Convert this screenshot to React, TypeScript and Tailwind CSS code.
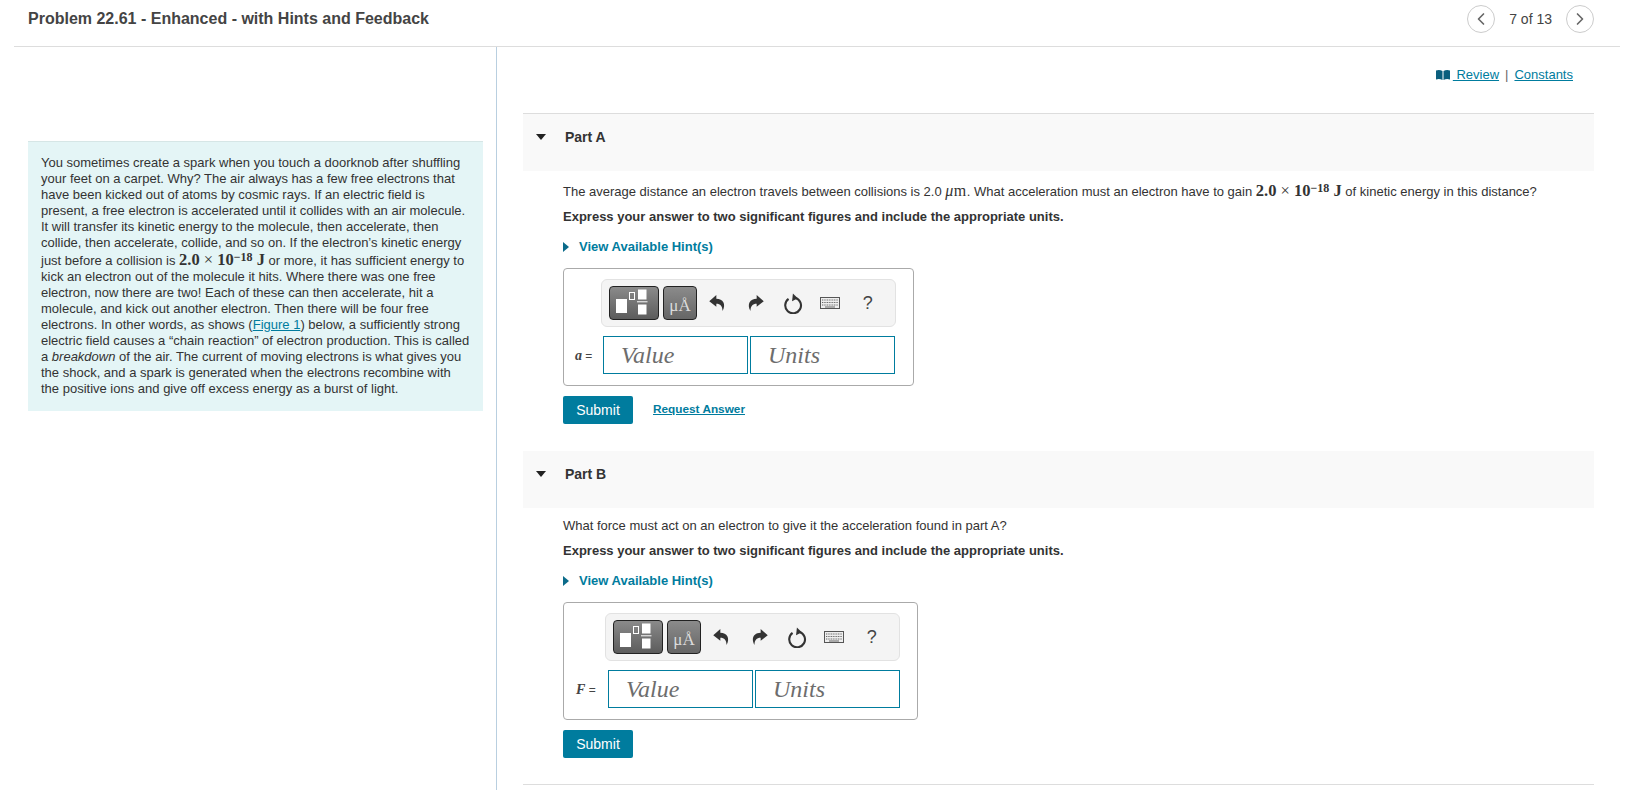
import { ChevronLeft, ChevronRight } from 'lucide-react';

function Energy({ tall }: { tall?: boolean }) {
  return (
    <span className={tall ? "font-['Liberation_Serif',serif] text-[16.5px] font-semibold leading-[18px] text-[#333]" : "font-['Liberation_Serif',serif] text-[16.5px] font-semibold leading-[16px] text-[#333]"}>
      2.0 <span className="font-normal">×</span> 10<sup className="relative -top-[4px] align-baseline text-[12px] font-bold leading-none">−18</sup> J
    </span>
  );
}

function UndoIcon({ flip }: { flip?: boolean }) {
  return (
    <svg viewBox="0 0 24 24" className={flip ? 'w-[20px] h-[20px] -scale-x-100' : 'w-[20px] h-[20px]'}>
      <path d="M10 2.5 L1.5 10 L10 16.5 V13 C15 13 17 15.5 17.5 21.5 C22 13.5 18 7 10 7 Z" fill="#333" />
    </svg>
  );
}

function ReloadIcon() {
  return (
    <svg viewBox="0 0 24 24" className="w-[21px] h-[21px]" fill="none">
      <path d="M7.5 6.8 A9 9 0 1 0 15.5 5.6" stroke="#333" strokeWidth="2.4" />
      <path d="M12.5 0.5 L18 6 L11.5 9.5 Z" fill="#333" />
    </svg>
  );
}

function KeyboardIcon() {
  return (
    <svg viewBox="0 0 20 12" className="w-[20px] h-[12px]" fill="none">
      <rect x="0.5" y="0.5" width="19" height="11" fill="#eee" stroke="#555" />
      <path d="M2 3 H18 M2 5.5 H18 M2 8 H18" stroke="#666" strokeWidth="1.2" strokeDasharray="1 0.7" />
      <path d="M5 10 H15" stroke="#666" strokeWidth="1" />
    </svg>
  );
}

function TemplateIcon() {
  return (
    <svg viewBox="0 0 48 32" className="w-[48px] h-[32px]">
      <rect x="6" y="12" width="11" height="14" fill="#fff" />
      <rect x="19.5" y="5.5" width="5" height="7" fill="none" stroke="#fff" />
      <rect x="28" y="2.5" width="8.5" height="10" fill="#fff" />
      <rect x="27" y="14.3" width="10.5" height="1" fill="#fff" />
      <rect x="28" y="17.5" width="8.5" height="10" fill="#fff" />
    </svg>
  );
}

function Toolbar() {
  return (
    <div className="flex items-center w-[295px] h-[48px] pl-[7px] bg-[#f4f4f4] border border-[#e2e2e2] rounded-[6px]">
      <div className="w-[50px] h-[34px] bg-gradient-to-b from-[#8b8b8b] to-[#5c5c5c] border border-[#222] rounded-[4px]">
        <TemplateIcon />
      </div>
      <div className="flex items-end justify-center ml-[4px] w-[34px] h-[34px] pb-[3px] bg-gradient-to-b from-[#8b8b8b] to-[#666] border border-[#222] rounded-[4px] font-['Liberation_Serif',serif] text-[17px] leading-[20px] text-[#dcdcdc]">
        μÅ
      </div>
      <div className="flex ml-[2px] text-[18px] text-[#444]">
        <div className="flex items-center justify-center w-[37.5px]"><UndoIcon /></div>
        <div className="flex items-center justify-center w-[37.5px]"><UndoIcon flip /></div>
        <div className="flex items-center justify-center w-[37.5px]"><ReloadIcon /></div>
        <div className="flex items-center justify-center w-[37.5px]"><KeyboardIcon /></div>
        <div className="flex items-center justify-center w-[37.5px]">?</div>
      </div>
    </div>
  );
}

function AnswerBox({ label, boxClass, labelClass }: { label: string; boxClass: string; labelClass: string }) {
  return (
    <div className={`flex flex-col items-end pt-[10px] h-[118px] border border-[#aaa] rounded-[4px] ${boxClass}`}>
      <Toolbar />
      <div className="flex items-center mt-[9px] self-stretch">
        <div className={`text-[12px] text-[#444] ${labelClass}`}>
          <span className="font-['Liberation_Serif',serif] font-bold italic text-[14px]">{label}</span> =
        </div>
        <div className="flex gap-[2px]">
          <div className="w-[145px] h-[38px] pl-[17px] border border-[#007c9e] font-['Liberation_Serif',serif] italic text-[24px] leading-[36px] text-[#6d6d6d]">Value</div>
          <div className="w-[145px] h-[38px] pl-[17px] border border-[#007c9e] font-['Liberation_Serif',serif] italic text-[24px] leading-[36px] text-[#6d6d6d]">Units</div>
        </div>
      </div>
    </div>
  );
}

function PartHeader({ title, topBorder }: { title: string; topBorder?: boolean }) {
  return (
    <div className={topBorder ? 'flex items-start gap-[19px] h-[58px] pt-[15px] pl-[13px] bg-[#f9f9f9] border-t border-[#ddd]' : 'flex items-start gap-[19px] h-[57px] pt-[15px] pl-[13px] bg-[#f9f9f9]'}>
      <div className="mt-[5px] w-0 h-0 border-x-[5px] border-x-transparent border-t-[6px] border-t-[#222]" />
      <div className="text-[14px] leading-[16px] font-bold text-[#333]">{title}</div>
    </div>
  );
}

function HintLink() {
  return (
    <div className="flex items-center gap-[10px] mt-[14px] text-[13px] leading-[16px] font-bold text-[#007c9e]">
      <div className="w-0 h-0 border-y-[5px] border-y-transparent border-l-[6px] border-l-[#0b6b8a]" />
      View Available Hint(s)
    </div>
  );
}

function SubmitButton() {
  return (
    <div className="flex items-center justify-center w-[70px] h-[28px] bg-[#007c9e] rounded-[2px] text-[14px] text-white">Submit</div>
  );
}

export default function App() {
  return (
    <div className="flex flex-col w-full h-[790px] overflow-hidden bg-white font-['Liberation_Sans',sans-serif] text-[#333]">
      {/* Title bar */}
      <div className="flex items-start justify-between h-[47px] mx-[14px] pl-[14px] pr-[26px] pt-[5px] border-b border-[#ddd]">
        <h1 className="mt-[4px] text-[16px] leading-[20px] font-bold text-[#444]">Problem 22.61 - Enhanced - with Hints and Feedback</h1>
        <div className="flex items-center text-[14px] text-[#444]">
          <div className="flex items-center justify-center w-[28px] h-[28px] border border-[#ccc] rounded-full text-[#666]"><ChevronLeft size={20} /></div>
          <span className="mx-[14px]">7 of 13</span>
          <div className="flex items-center justify-center w-[28px] h-[28px] border border-[#ccc] rounded-full text-[#666]"><ChevronRight size={20} /></div>
        </div>
      </div>

      <div className="flex flex-1 overflow-hidden">
        {/* Intro column */}
        <div className="w-[497px] shrink-0 pl-[28px] pr-[13px] pt-[94px] border-r border-[#b9cfe0]">
          <div className="w-[455px] h-[270px] pl-[13px] pr-[12px] pt-[13px] bg-[#e4f5f6] border-t border-[#d6e6e6] text-[13px] leading-[16px]">
            You sometimes create a spark when you touch a doorknob after shuffling your feet on a carpet. Why? The air always has a few free electrons that have been kicked out of atoms by cosmic rays. If an electric field is present, a free electron is accelerated until it collides with an air molecule. It will transfer its kinetic energy to the molecule, then accelerate, then collide, then accelerate, collide, and so on. If the electron’s kinetic energy just before a collision is <Energy tall /> or more, it has sufficient energy to kick an electron out of the molecule it hits. Where there was one free electron, now there are two! Each of these can then accelerate, hit a molecule, and kick out another electron. Then there will be four free electrons. In other words, as shows (<span className="text-[#007c9e] underline">Figure 1</span>) below, a sufficiently strong electric field causes a “chain reaction” of electron production. This is called a <i>breakdown</i> of the air. The current of moving electrons is what gives you the shock, and a spark is generated when the electrons recombine with the positive ions and give off excess energy as a burst of light.
          </div>
        </div>

        {/* Question column */}
        <div className="flex-1 pl-[26px] pr-[40px]">
          <div className="flex items-center justify-end h-[66px] pb-[11px] pr-[21px] text-[13px] text-[#007c9e]">
            <svg viewBox="0 0 14 10" className="w-[14px] h-[10px] mr-[3px]">
              <path d="M0 0.5 Q3.5 -0.5 6.5 1 V10 Q3.5 8.5 0 9.5 Z M7.5 1 Q10.5 -0.5 14 0.5 V9.5 Q10.5 8.5 7.5 10 Z" fill="#0b5f7e" />
            </svg>
            <span className="underline">&nbsp;Review</span>
            <span className="mx-[6px] text-[#666]">|</span>
            <span className="underline">Constants</span>
          </div>

          <PartHeader title="Part A" topBorder />
          <div className="pl-[40px] pt-[12px]">
            <p className="text-[13px] leading-[16px]">
              The average distance an electron travels between collisions is 2.0 <span className="font-['Liberation_Serif',serif] text-[16px] tracking-[0.5px] leading-[16px]"><i>μ</i>m</span>. What acceleration must an electron have to gain <Energy /> of kinetic energy in this distance?
            </p>
            <p className="mt-[9px] text-[13px] leading-[16px] font-bold">Express your answer to two significant figures and include the appropriate units.</p>
            <HintLink />
            <div className="mt-[13px]">
              <AnswerBox label="a" boxClass="w-[351px] pr-[17px]" labelClass="w-[39px] pl-[11px]" />
            </div>
            <div className="flex items-center gap-[20px] mt-[10px] mb-[27px]">
              <SubmitButton />
              <span className="text-[11.8px] font-bold text-[#007c9e] underline">Request Answer</span>
            </div>
          </div>

          <PartHeader title="Part B" />
          <div className="pl-[40px] pt-[10px] pb-[26px] border-b border-[#ddd]">
            <p className="text-[13px] leading-[16px]">What force must act on an electron to give it the acceleration found in part A?</p>
            <p className="mt-[9px] text-[13px] leading-[16px] font-bold">Express your answer to two significant figures and include the appropriate units.</p>
            <HintLink />
            <div className="mt-[13px]">
              <AnswerBox label="F" boxClass="w-[355px] pr-[17px]" labelClass="w-[44px] pl-[12px]" />
            </div>
            <div className="mt-[10px]">
              <SubmitButton />
            </div>
          </div>
        </div>
      </div>
    </div>
  );
}
